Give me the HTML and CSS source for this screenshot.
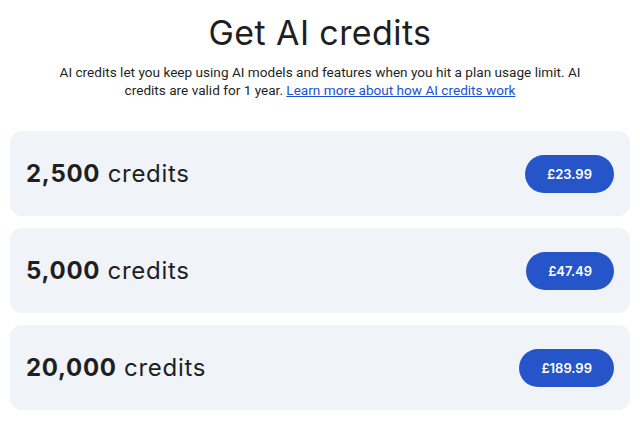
FILE: index.html
```html
<!DOCTYPE html>
<html lang="en">
<head>
    <meta charset="UTF-8">
    <meta name="viewport" content="width=device-width, initial-scale=1.0">
    <title>Get AI credits</title>
    <link rel="stylesheet" href="styles.css">
</head>
<body>
    <div class="header">
        <h1 class="title">Get AI credits</h1>
        <p class="intro">
            <span>AI credits let you keep using AI models and features when you hit a plan usage limit. AI</span>
            <span>credits are valid for 1 year.</span> <a href="#">Learn more about how AI credits work</a>
        </p>
    </div>

    <div class="packs">
        <div class="pack">
            <div class="amount"><b>2,500</b> credits</div>
            <button class="buy">£23.99</button>
        </div>
        <div class="pack">
            <div class="amount"><b>5,000</b> credits</div>
            <button class="buy">£47.49</button>
        </div>
        <div class="pack">
            <div class="amount"><b>20,000</b> credits</div>
            <button class="buy">£189.99</button>
        </div>
    </div>
</body>
</html>
```

FILE: styles.css
```css
body {
    font-family: Inter, Roboto, "Liberation Sans", sans-serif;
    background-color: #ffffff;
    color: #1f1f1f;
    margin: 0;
    padding: 10px;
}

.header {
    text-align: center;
}

.title {
    font-size: 34px;
    font-weight: 400;
    letter-spacing: 0.4px;
    line-height: 40px;
    margin: 3px 0 10px;
}

.intro {
    font-family: Roboto, sans-serif;
    font-size: 13.6px;
    line-height: 18px;
    max-width: 560px;
    margin: 0 auto 32px;
    color: #1f1f1f;
}

.intro a {
    color: #1a52d4;
}

.packs {
    display: flex;
    flex-direction: column;
    gap: 12px;
}

.pack {
    background-color: #f0f3f8;
    border-radius: 12px;
    height: 85px;
    padding: 0 16px;
    display: flex;
    align-items: center;
    justify-content: space-between;
}

.amount {
    font-size: 24px;
    letter-spacing: 0.7px;
}

.amount b {
    font-weight: 700;
}

.buy {
    font-family: inherit;
    height: 38px;
    padding: 0 22px;
    border: none;
    border-radius: 19px;
    background-color: #2555c8;
    color: #ffffff;
    font-size: 13px;
    font-weight: 600;
    cursor: pointer;
}
```
